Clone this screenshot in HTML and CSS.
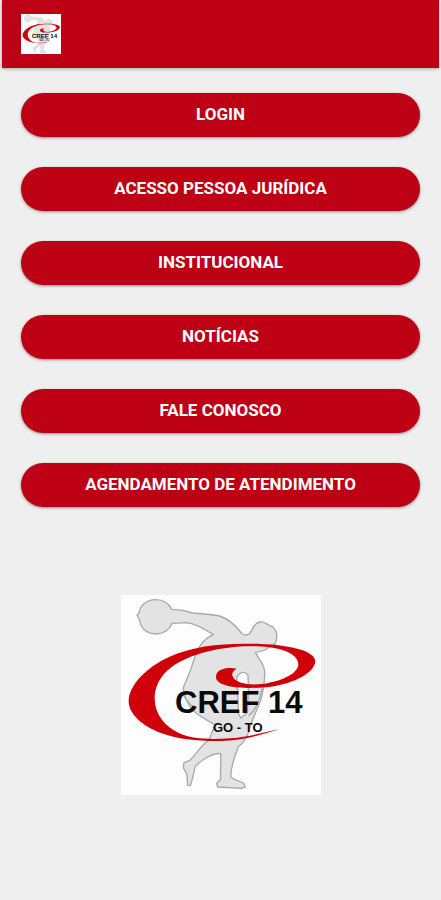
FILE: index.html
```html
<!DOCTYPE html>
<html lang="pt-BR">
<head>
    <meta charset="UTF-8">
    <meta name="viewport" content="width=device-width, initial-scale=1.0">
    <title>CREF 14</title>
    <link rel="stylesheet" href="styles.css">
</head>
<body>

    <header class="topbar">
        <svg class="topbar-logo" viewBox="0 0 200 200" aria-hidden="true">
            <use href="#cref"/>
        </svg>
    </header>

    <main class="content">
        <nav class="menu">
            <button type="button" class="btn">LOGIN</button>
            <button type="button" class="btn">ACESSO PESSOA JURÍDICA</button>
            <button type="button" class="btn">INSTITUCIONAL</button>
            <button type="button" class="btn">NOTÍCIAS</button>
            <button type="button" class="btn">FALE CONOSCO</button>
            <button type="button" class="btn">AGENDAMENTO DE ATENDIMENTO</button>
        </nav>

        <svg class="logo" viewBox="0 0 200 200" role="img" aria-label="CREF 14 GO - TO">
            <g id="cref">
                <g transform="scale(.33333) translate(-30 -30)">
                    <!-- discus thrower -->
                    <path class="figure" d="M78 91 L84 84 C88 60 108 44 133 44 C156 44 174 56 182 73 L216 76 L245 84 C275 86 304 88 326 93 C352 102 378 126 393 146 Q404 154 416 146 C424 136 426 116 446 111 C464 108 470 122 484 125 Q500 138 497 158 C497 172 489 184 477 184 L462 195 Q446 201 433 202 L442 218 C451 230 463 250 461 270 C460 302 455 324 450 344 C440 370 420 410 413 440 C408 460 396 474 382 485 C372 510 360 545 359 575 L370 583 L398 594 L403 606 L392 610 L320 606 L317 595 L329 583 C327 556 331 530 329 506 C306 502 270 526 252 545 C249 562 244 585 238 602 L230 601 L228 568 L217 549 L219 533 L237 526 C256 506 270 482 294 464 L312 420 C285 402 255 390 241 370 C228 352 218 334 217 308 C228 280 240 255 247 230 C258 190 280 160 307 149 C284 134 250 116 228 113 L184 115 C174 136 156 147 133 147 C108 147 88 130 86 105 Z"/>
                    <path class="opening" d="M377 276 Q394 252 411 269 Q414 320 409 382 L390 399 Q376 380 382 360 Z"/>
                    <path class="line" d="M217 330 Q236 362 254 370 M453 310 Q442 370 413 392"/>
                    <!-- red swoosh -->
                    <path class="swoosh" d="M503 433 C450 450 390 468 330 468 C265 469 200 463 150 444 C92 422 54 386 53 350 C53 300 108 246 174 216 C254 179 350 173 450 177 C538 180 613 198 613 229 C612 262 550 296 480 305 C420 313 315 311 315 276 C315 252 348 246 377 251 C366 258 361 265 365 274 C374 299 430 303 472 294 C515 286 562 265 562 238 C561 204 505 186 438 184 C340 181 240 204 182 246 C145 273 130 310 131 342 C132 389 162 425 205 445 C246 463 300 464 358 460 C410 456 458 443 503 433 Z"/>
                </g>
                <text class="logo-name" x="54" y="118">CREF 14</text>
                <text class="logo-region" x="92" y="137">GO - TO</text>
            </g>
        </svg>
    </main>

</body>
</html>
```
FILE: styles.css
```css
*{
    box-sizing: border-box;
}
body{
    margin: 0;
    padding: 0 2px;
    min-height: 100vh;
    background: #efefef;
    font-family: Roboto, "Liberation Sans", sans-serif;
}
.topbar{
    display: flex;
    align-items: center;
    height: 68px;
    padding: 0 19px;
    background: #bd0014;
    box-shadow: 0 1px 3px rgba(0, 0, 0, 0.3);
}
.topbar-logo{
    width: 40px;
    height: 40px;
    background: #fff;
}
.content{
    display: flex;
    flex-direction: column;
    align-items: center;
    padding: 25px 19px;
}
.menu{
    display: flex;
    flex-direction: column;
    gap: 30px;
    width: 100%;
}
.btn{
    height: 44px;
    padding: 0 16px 2px;
    border: 0;
    border-radius: 22px;
    background: #bd0014;
    color: #fff;
    font-family: inherit;
    font-size: 17px;
    font-weight: 700;
    box-shadow: 0 1px 3px rgba(0, 0, 0, 0.4);
    cursor: pointer;
}
.logo{
    width: 200px;
    height: 200px;
    margin-top: 88px;
    background: #fdfdfd;
}
.figure{
    fill: #e3e3e3;
    stroke: #a8a8a8;
    stroke-width: 4;
    stroke-linejoin: round;
}
.opening{
    fill: #fdfdfd;
    stroke: #a8a8a8;
    stroke-width: 4;
}
.line{
    fill: none;
    stroke: #a8a8a8;
    stroke-width: 4;
}
.swoosh{
    fill: #d0000b;
}
.logo-name,
.logo-region{
    fill: #0a0a0a;
    font-family: "Liberation Sans", Arial, sans-serif;
    font-weight: bold;
}
.logo-name{
    font-size: 31px;
}
.logo-region{
    font-size: 13px;
}
```
